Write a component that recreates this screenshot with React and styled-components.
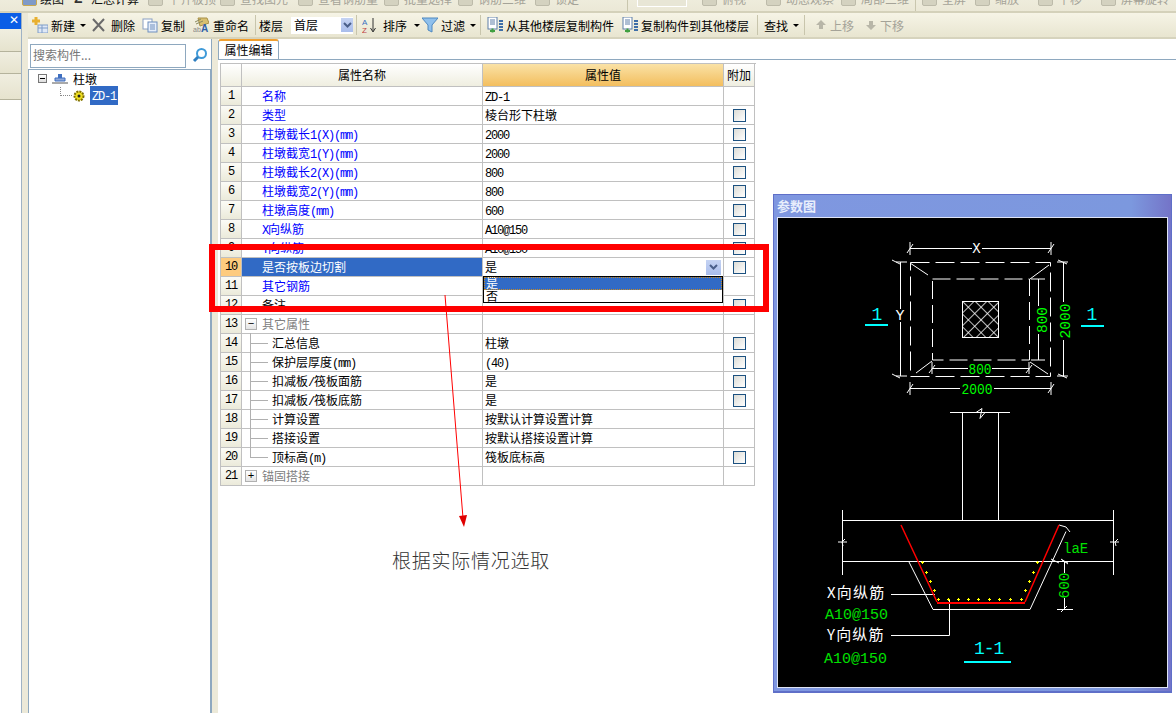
import React from "react";
import styled, { createGlobalStyle } from "styled-components";

const GlobalStyle = createGlobalStyle`
  html, body { margin: 0; padding: 0; background: #fff; }
  body { font: 12px "Noto Sans CJK SC", "Liberation Sans", sans-serif; color: #000; }
`;

const Page = styled.div`
  position: relative;
  width: 1176px;
  height: 713px;
  overflow: hidden;
  display: flex;
  flex-direction: column;
`;

/* top toolbar, cut off by the screenshot */
const TopBar = styled.div`
  flex: 0 0 13px;
  height: 13px;
  overflow: hidden;
  display: flex;
  padding-left: 22px;
  box-sizing: border-box;
  background: linear-gradient(#eeecdc, #ebe8d6);
  border-bottom: 2px solid #d4d1ba;
`;
const TopItem = styled.div`
  flex: 0 0 ${(p) => p.$w}px;
  height: 24px;
  margin-top: -14px;
  display: flex;
  align-items: center;
  gap: ${(p) => p.$gap || 5}px;
  color: ${(p) => (p.$on ? "#111" : "#a5a398")};
  white-space: nowrap;
`;
const TopIcon = styled.i`
  flex: 0 0 15px;
  height: 15px;
  box-sizing: border-box;
  background: ${(p) => (p.$on ? "#7f9ac8" : "#d4d2c0")};
  border: 1px solid ${(p) => (p.$on ? "#c9a850" : "#bdbbaa")};
  border-radius: 2px;
`;
const Sigma = styled.span`
  flex: 0 0 12px;
  font: 700 14px "Liberation Sans", sans-serif;
  color: #333;
`;
const TopSep = styled.div`
  flex: 0 0 ${(p) => p.$w}px;
  box-sizing: border-box;
  border-left: 1px solid #c9c6ae;
`;
const Combo = styled.div`
  flex: 0 0 50px;
  margin-right: 15px;
  height: 7px;
  box-sizing: border-box;
  border: 1px solid #fff;
  border-top: 0;
  background: #e8e6d6;
`;

const Work = styled.div`
  flex: 1;
  min-height: 0;
  display: flex;
`;

/* collapsed nav strip on the far left */
const Strip = styled.div`
  flex: 0 0 21px;
  display: flex;
  flex-direction: column;
  border-right: 1px solid #9fb2c4;
`;
const CloseBar = styled.div`
  height: 16px;
  background: #0a5de6;
  color: #fff;
  font: 12px "Liberation Sans", sans-serif;
  text-align: right;
  padding-right: 2px;
  line-height: 15px;
`;
const StripTab = styled.div`
  height: ${(p) => p.$h}px;
  box-sizing: border-box;
  background: linear-gradient(#f0eee0, #e6e3ce);
  border-bottom: 1px solid #b5b39c;
`;
const StripGap = styled.div`
  flex: 0 0 6px;
  background: #ece9d8;
`;

const Main = styled.div`
  flex: 1;
  min-width: 0;
  display: flex;
  flex-direction: column;
`;

const ToolBar = styled.div`
  flex: 0 0 26px;
  box-sizing: border-box;
  display: flex;
  align-items: center;
  padding-left: 4px;
  background: linear-gradient(#f6f4e6, #e8e5d0);
  border-bottom: 2px solid #d6d3bd;
`;
const Tool = styled.div`
  flex: 0 0 ${(p) => p.$w}px;
  display: flex;
  align-items: center;
  gap: ${(p) => p.$gap || 3}px;
  white-space: nowrap;
  color: ${(p) => (p.$off ? "#a5a398" : "#000")};
`;
const Caret = styled.i`
  width: 0;
  height: 0;
  margin-left: 2px;
  border: 3px solid transparent;
  border-top: 3px solid #000;
  border-bottom: 0;
`;
const Sep = styled.div`
  flex: 0 0 ${(p) => p.$w}px;
  height: 20px;
  box-sizing: border-box;
  border-left: 1px solid #c8c5ac;
`;
const FloorSelect = styled.div`
  flex: 0 0 62px;
  margin-right: 3px;
  height: 17px;
  padding-left: 3px;
  box-sizing: border-box;
  background: #fff;
  display: flex;
  align-items: center;
  justify-content: space-between;
  line-height: 14px;
`;
const ArrowBtn = styled.span`
  width: ${(p) => p.$s || 12}px;
  height: ${(p) => p.$s || 14}px;
  background: linear-gradient(#c5d3f3, #a9bdec);
  display: flex;
  align-items: center;
  justify-content: center;
`;

const Content = styled.div`
  flex: 1;
  min-height: 0;
  display: flex;
`;

const Side = styled.div`
  flex: 0 0 183px;
  display: flex;
  flex-direction: column;
  background: #fff;
`;
const SearchRow = styled.div`
  flex: 0 0 30px;
  padding: 5px 0 0 2px;
  box-sizing: border-box;
  display: flex;
  align-items: flex-start;
  gap: 5px;
`;
const SearchBox = styled.div`
  width: 156px;
  height: 24px;
  box-sizing: border-box;
  border: 1px solid #8ea8bf;
  color: #777;
  line-height: 20px;
  padding-left: 2px;
`;
const TreePane = styled.div`
  flex: 1;
  border: 1px solid #8ea8bf;
  border-width: 1px 1px 0 1px;
  padding: 0 0 0 9px;
`;
const TreeRow = styled.div`
  height: 17px;
  display: flex;
  align-items: center;
  gap: 5px;
  padding-left: ${(p) => p.$indent || 0}px;
`;
const Expander = styled.span`
  width: 9px;
  height: 9px;
  box-sizing: border-box;
  border: 1px solid #777;
  background: linear-gradient(#fff, #ddd);
  display: flex;
  align-items: center;
  justify-content: center;
  &::after { content: ""; width: 5px; height: 1px; background: #000; }
`;
const Picked = styled.span`
  background: #316ac5;
  color: #fff;
  padding: 1px 2px;
  line-height: 15px;
`;
const Dots = styled.span`
  width: 11px;
  height: 8px;
  margin-top: -8px;
  margin-right: -4px;
  border-left: 1px dotted #888;
  border-bottom: 1px dotted #888;
`;

const Splitter = styled.div`
  flex: 0 0 6px;
  background: #ece9d8;
  border-left: 1px solid #8ea8bf;
`;

const EditPane = styled.div`
  flex: 1;
  min-width: 0;
  display: flex;
  flex-direction: column;
`;
const TabRow = styled.div`
  flex: 0 0 20px;
  box-sizing: border-box;
  border-bottom: 1px solid #8ea8bf;
  display: flex;
`;
const Tab = styled.div`
  width: 61px;
  height: 20px;
  box-sizing: border-box;
  background: #fff;
  border: 1px solid #8ea8bf;
  border-top: 2px solid #f0a030;
  border-bottom: 0;
  border-radius: 3px 3px 0 0;
  text-align: center;
  line-height: 17px;
`;
const TableWrap = styled.div`
  padding: 3px 0 0 2px;
`;
const Table = styled.div`
  width: 535px;
  border-top: 1px solid #c0c0c0;
  border-left: 1px solid #c0c0c0;
`;
const Row = styled.div`
  display: grid;
  grid-template-columns: 21px 241px 241px 31px;
  height: ${(p) => p.$h || 19}px;
`;
const Cell = styled.div`
  position: relative;
  box-sizing: border-box;
  border-right: 1px solid #c0c0c0;
  border-bottom: 1px solid #c0c0c0;
  display: flex;
  align-items: center;
  white-space: nowrap;
  line-height: 16px;
`;
const HeadCell = styled(Cell)`
  justify-content: center;
  background: ${(p) =>
    p.$active ? "linear-gradient(#fae2a6, #f3be5e)" : "linear-gradient(#fff, #efeee0)"};
`;
const NumCell = styled(Cell)`
  justify-content: center;
  background: ${(p) =>
    p.$active ? "#fdcb7f" : "linear-gradient(#fbfbf6, #ebeada)"};
`;
const NameCell = styled(Cell)`
  padding-left: ${(p) => (p.$child ? 30 : p.$group ? 3 : 20)}px;
  gap: 5px;
  color: ${(p) =>
    p.$selected ? "#fff" : p.$blue ? "#0000ff" : p.$group ? "#808080" : "#000"};
  background: ${(p) => (p.$selected ? "#316ac5" : "#fff")};
  ${(p) =>
    p.$child &&
    `
    &::before {
      content: "";
      position: absolute;
      left: 9px;
      width: 17px;
      top: 9px;
      height: 1px;
      background: #b0b0b0;
    }
    &::after {
      content: "";
      position: absolute;
      left: 8px;
      width: 1px;
      top: -1px;
      height: ${p.$last ? 11 : 20}px;
      background: #b0b0b0;
    }
  `}
`;
const GroupBox = styled.span`
  width: 12px;
  height: 12px;
  box-sizing: border-box;
  border: 1px solid #b0b0b0;
  background: linear-gradient(#fff, #e4e4e4);
  color: #000;
  display: flex;
  align-items: center;
  justify-content: center;
  font: 11px/10px "Liberation Mono", monospace;
`;
const ValueCell = styled(Cell)`
  padding-left: 2px;
  justify-content: space-between;
  padding-right: 2px;
`;
const AddCell = styled(Cell)`
  justify-content: center;
`;
const Check = styled.span`
  width: 13px;
  height: 13px;
  box-sizing: border-box;
  border: 1px solid #1c5180;
  background: linear-gradient(135deg, #dcdcd6, #fff);
`;
const Latin = styled.span`
  font: 12px "Liberation Mono", monospace;
  letter-spacing: -1.2px;
`;

/* open dropdown list for row 10 */
const DropList = styled.div`
  position: absolute;
  left: 483px;
  top: 276px;
  width: 240px;
  height: 27px;
  box-sizing: border-box;
  border: 1px solid #000;
  background: #fff;
  line-height: 12px;
`;
const DropItem = styled.div`
  height: ${(p) => p.$h}px;
  padding-left: 2px;
  box-sizing: border-box;
  overflow: visible;
  ${(p) =>
    p.$on &&
    `background: #316ac5; color: #fff; outline: 1px dotted #c98a20; outline-offset: -1px;`}
`;

const RedFrame = styled.div`
  position: absolute;
  left: 209px;
  top: 244px;
  width: 560px;
  height: 68px;
  box-sizing: border-box;
  border: 6px solid #ff0000;
`;
const Pointer = styled.svg`
  position: absolute;
  left: 440px;
  top: 290px;
`;
const Note = styled.div`
  position: absolute;
  left: 392px;
  top: 547px;
  font-size: 19px;
  font-weight: 300;
  line-height: 26px;
  color: #333;
  letter-spacing: 0.75px;
`;

/* floating parameter window */
const ParamWindow = styled.div`
  position: absolute;
  left: 773px;
  top: 194px;
  width: 399px;
  height: 499px;
  box-sizing: border-box;
  border: 1px solid #5f6fc8;
  border-width: 1px 1px 2px 1px;
  background: linear-gradient(90deg, #7f97e0, #7c98de 90%, #7474c8);
  padding: 0 3px 3px;
  display: flex;
  flex-direction: column;
`;
const ParamTitle = styled.div`
  flex: 0 0 21px;
  color: #e8eefc;
  font-size: 13px;
  font-weight: 700;
  line-height: 22px;
`;
const ParamCanvas = styled.div`
  flex: 1;
  background: #000;
  border: 1px solid #dfe4f5;
  overflow: hidden;
`;

const mixed = (text) =>
  text.split(/([\x00-\x7f]+)/).map((part, i) =>
    /^[\x00-\x7f]+$/.test(part) ? <Latin key={i}>{part}</Latin> : part
  );

const Svg = ({ w = 16, h = 16, children }) => (
  <svg width={w} height={h} viewBox={`0 0 ${w} ${h}`} style={{ flex: "none" }}>
    {children}
  </svg>
);

const NewIcon = () => (
  <Svg>
    <rect x="6" y="8" width="10" height="8" fill="#dfe8f6" stroke="#7f9dc8" />
    <path d="M6 11h10M10 8v8" stroke="#7f9dc8" />
    <path d="M4 0v8M0 4h8" stroke="#e8b030" strokeWidth="3" />
  </Svg>
);
const DeleteIcon = () => (
  <Svg w={13}>
    <path d="M1 2l11 12M12 2L1 14" stroke="#6a6a6a" strokeWidth="2" />
  </Svg>
);
const CopyIcon = () => (
  <Svg>
    <rect x="1" y="2" width="9" height="10" fill="#fff" stroke="#8aa0c4" />
    <rect x="6" y="5" width="9" height="10" fill="#e6eefa" stroke="#6f8fbe" />
    <path d="M8 8h5M8 10h5M8 12h5" stroke="#6f8fbe" />
  </Svg>
);
const RenameIcon = () => (
  <Svg>
    <path d="M5 1l9 0 2 5-9 3z" fill="#d8c070" stroke="#a89048" />
    <path d="M2 5l6-3M3 7l7-3" stroke="#8a8a60" />
    <text x="0" y="15" fontSize="7" fill="#888" fontFamily="Liberation Sans">ab</text>
    <text x="8" y="15" fontSize="10" fill="#2f5fa8" fontFamily="Liberation Sans" fontWeight="700">A</text>
  </Svg>
);
const SortIcon = () => (
  <Svg>
    <text x="0" y="8" fontSize="8" fill="#3a6fc0" fontFamily="Liberation Sans">A</text>
    <text x="0" y="16" fontSize="8" fill="#c04040" fontFamily="Liberation Sans">Z</text>
    <path d="M11 1v13M8.500 11l2.500 4 2.500-4" stroke="#333" fill="none" />
  </Svg>
);
const FilterIcon = () => (
  <Svg>
    <path d="M0 1h16l-6 7v7l-4-2V8z" fill="#8fc0ec" stroke="#4f88c0" />
  </Svg>
);
const FloorCopyIcon = ({ color }) => (
  <Svg>
    <rect x="1" y="0" width="9" height="12" fill="#fff" stroke="#5f7fa8" />
    <path d="M3 3h5M3 5h5M3 7h5" stroke="#5f7fa8" />
    <path d="M12 4h4M12 7h4M12 10h4M12 13h4" stroke="#3f6fa8" strokeWidth="2" />
    <path d="M3 14h5M5.500 11.500v4" stroke={color} strokeWidth="2" />
  </Svg>
);
const UpIcon = () => (
  <Svg w={12}>
    <path d="M6 3l5 5H8v4H4V8H1z" fill="#b8b6a8" />
  </Svg>
);
const DownIcon = () => (
  <Svg w={12}>
    <path d="M6 13l5-5H8V4H4v4H1z" fill="#b8b6a8" />
  </Svg>
);
const Chevron = () => (
  <svg width="9" height="7" viewBox="0 0 9 7">
    <path d="M1 1l3.500 3.500L8 1" stroke="#4a5f8a" strokeWidth="2" fill="none" />
  </svg>
);
const SearchIcon = () => (
  <svg width="16" height="16" viewBox="0 0 16 16" style={{ marginTop: 3, marginLeft: 1 }}>
    <circle cx="9.500" cy="6.500" r="4.500" fill="#fff" stroke="#3f9ad8" strokeWidth="2" />
    <path d="M6 10l-4 4" stroke="#2f7fc0" strokeWidth="3" />
  </svg>
);
const PierIcon = () => (
  <Svg w={16} h={11}>
    <path d="M6 1h4v4H6z" fill="#3f6fc0" />
    <path d="M3 5h10v3H3z" fill="#8fa8d8" stroke="#3f6fc0" />
    <path d="M0 10h16" stroke="#555" />
  </Svg>
);
const GearIcon = () => (
  <Svg w={12} h={12}>
    <circle cx="6" cy="6" r="4.500" fill="#f0e020" stroke="#807000" strokeDasharray="2 1" strokeWidth="2" />
    <circle cx="6" cy="6" r="1.500" fill="#222" />
  </Svg>
);

const topItems = [
  { w: 52, t: "绘图", on: true, gap: 3 },
  { w: 74, t: "汇总计算", on: true, sigma: true },
  { w: 72, t: "平齐板顶" },
  { w: 78, t: "查找图元" },
  { w: 86, t: "查看钢筋量" },
  { w: 74, t: "批量选择" },
  { w: 77, t: "钢筋三维" },
  { w: 92, t: "锁定" },
];
const topItems2 = [
  { w: 64, t: "俯视" },
  { w: 75, t: "动态观察" },
  { w: 74, t: "局部三维" },
];
const topItems3 = [
  { w: 53, t: "全屏" },
  { w: 63, t: "缩放" },
  { w: 63, t: "平移" },
  { w: 75, t: "屏幕旋转" },
];

const rows = [
  { n: 1, name: "名称", value: "ZD-1", blue: true },
  { n: 2, name: "类型", value: "棱台形下柱墩", blue: true, check: true },
  { n: 3, name: "柱墩截长1(X)(mm)", value: "2000", blue: true, check: true },
  { n: 4, name: "柱墩截宽1(Y)(mm)", value: "2000", blue: true, check: true },
  { n: 5, name: "柱墩截长2(X)(mm)", value: "800", blue: true, check: true },
  { n: 6, name: "柱墩截宽2(Y)(mm)", value: "800", blue: true, check: true },
  { n: 7, name: "柱墩高度(mm)", value: "600", blue: true, check: true },
  { n: 8, name: "X向纵筋", value: "A10@150", blue: true, check: true },
  { n: 9, name: "Y向纵筋", value: "A10@150", blue: true, check: true },
  { n: 10, name: "是否按板边切割", value: "是", selected: true, check: true },
  { n: 11, name: "其它钢筋", value: "", blue: true },
  { n: 12, name: "备注", value: "", check: true },
  { n: 13, name: "其它属性", value: "", group: "−" },
  { n: 14, name: "汇总信息", value: "柱墩", child: true, check: true },
  { n: 15, name: "保护层厚度(mm)", value: "(40)", child: true, check: true },
  { n: 16, name: "扣减板/筏板面筋", value: "是", child: true, check: true },
  { n: 17, name: "扣减板/筏板底筋", value: "是", child: true, check: true },
  { n: 18, name: "计算设置", value: "按默认计算设置计算", child: true },
  { n: 19, name: "搭接设置", value: "按默认搭接设置计算", child: true },
  { n: 20, name: "顶标高(m)", value: "筏板底标高", child: true, last: true, check: true },
  { n: 21, name: "锚固搭接", value: "", group: "+" },
];

const W = { stroke: "#fff", fill: "none" };
const mono = "Liberation Mono, monospace";
const cjk = "Noto Sans CJK SC, sans-serif";

const sideDots = [[921, 561], [925, 571], [929, 580], [933, 589], [1036, 561], [1032, 571], [1028, 580], [1024, 589]];
const bottomDots = [937, 947, 957, 967, 977, 988, 998, 1009, 1020].map((x) => [x, 598]);

const Drawing = () => (
  <svg width="390" height="472" viewBox="777 217 390 472" style={{ display: "block" }}>
    <defs>
      <pattern id="hatch" width="9" height="9" patternUnits="userSpaceOnUse" patternTransform="rotate(45)">
        <path d="M0 0h9M0 0v9" stroke="#fff" strokeWidth="1.500" />
      </pattern>
    </defs>

    {/* plan view */}
    <g {...W}>
      <path d="M909 247.500h62M981 247.500h69M909 241v13M1050 241v13M906 252l6-9M1047 252l6-9" />
      <path d="M899.500 261v47M899.500 321v54M895 261h11M895 375h11M891 259l8 4M891 373l8 4" />
      <path d="M1062.500 261v40M1062.500 339v36M1056 261h11M1056 375h11M1057 259l9 4M1057 373l9 4" />
      <path d="M1037.500 278v27M1037.500 333v26M1030 278h14M1030 359h14" />
      <path d="M931 367.500h36M991 367.500h37M931 361v12M1028 361v12M928 372l6-8M1025 372l6-8" />
      <path d="M909 387.500h50M993 387.500h57M909 381v13M1050 381v13M906 392l6-9M1047 392l6-9" />
      <rect x="909.500" y="261.500" width="140" height="114" strokeDasharray="19 6" />
      <rect x="931.500" y="278" width="97" height="81" strokeDasharray="18 6" />
      <path d="M909 262l18 12M1048 264l-19 14M931 360l-16 12M1029 361l18 12" />
      <rect x="961.500" y="300.500" width="36" height="36" fill="url(#hatch)" />
    </g>
    <g fontFamily={mono} textAnchor="middle">
      <text x="975.500" y="252" fontSize="14" fill="#fff">X</text>
      <text x="899" y="319" fontSize="15" fill="#fff">Y</text>
      <text x="979" y="373" fontSize="15" fill="#00ff00" textLength="23" lengthAdjust="spacingAndGlyphs">800</text>
      <text x="976" y="393" fontSize="15" fill="#00ff00" textLength="31" lengthAdjust="spacingAndGlyphs">2000</text>
      <text transform="translate(1046 319) rotate(-90)" fontSize="15" fill="#00ff00" textLength="26" lengthAdjust="spacingAndGlyphs">800</text>
      <text transform="translate(1069 320) rotate(-90)" fontSize="15" fill="#00ff00" textLength="35" lengthAdjust="spacingAndGlyphs">2000</text>
      <text x="876" y="319" fontSize="18" fill="#00ffff">1</text>
      <text x="1091" y="319" fontSize="18" fill="#00ffff">1</text>
    </g>
    <path d="M864 324h23M1080 325h23" stroke="#00ffff" strokeWidth="2" />

    {/* section view */}
    <g {...W}>
      <path d="M949 411.500h60M961.500 411.500v108M997.500 411.500v108" />
      <path d="M975 411.500l6-4-2 10 5-6" />
      <path d="M841 519.500h272M841 560.500h272M841.500 509v65M1112.500 509v65" />
      <path d="M837 541h9M841 541l3-3M841 541l1 4M1109 541h9M1114 541l3-3M1114 541l1 4" />
      <path d="M908 561l24 47.500h97l36-78" />
      <path d="M1058 524l7 2 4 5M1061 559l6 3M1050 558l8 4" />
      <path d="M890 593.500h44M890 634.500h58.500v-36" />
      <path d="M1063.500 560v12M1063.500 597v11M1056 608.500h16M1060 611l6-6M1060 558l7 5" />
    </g>
    <path d="M900 524l36 77M1058 524l-34 77" stroke="#ff0000" strokeWidth="1.500" fill="none" />
    <path d="M936 602h88" stroke="#ff0000" strokeWidth="2" fill="none" />
    <g stroke="#ffff00">
      {[...bottomDots, ...sideDots].map(([x, y]) => (
        <path key={`${x}-${y}`} d={`M${x - 1} ${y + 0.5}h3M${x + 0.5} ${y - 1}v3`} />
      ))}
    </g>
    <g fontFamily={mono}>
      <text x="826" y="597" fontSize="15" fill="#fff" fontFamily={cjk} letterSpacing="1.2">X向纵筋</text>
      <text x="826" y="639" fontSize="15" fill="#fff" fontFamily={cjk} letterSpacing="1.2">Y向纵筋</text>
      <text x="824" y="618" fontSize="15" fill="#00e000">A10@150</text>
      <text x="823" y="662" fontSize="15" fill="#00e000">A10@150</text>
      <text x="1062" y="552" fontSize="14" fill="#00e000">laE</text>
      <text x="973" y="653" fontSize="18" fill="#00ffff" letterSpacing="-1">1-1</text>
      <text transform="translate(1068 584.500) rotate(-90)" textAnchor="middle" fontSize="15" fill="#00e000" textLength="26" lengthAdjust="spacingAndGlyphs">600</text>
    </g>
    <path d="M963 661h47" stroke="#00ffff" strokeWidth="2" />
  </svg>
);

export default function App() {
  return (
    <Page>
      <GlobalStyle />
      <TopBar>
        {topItems.map((it) => (
          <TopItem key={it.t} $w={it.w} $on={it.on} $gap={it.gap}>
            {it.sigma ? <Sigma>Σ</Sigma> : <TopIcon $on={it.on} />}
            {it.t}
          </TopItem>
        ))}
        <TopSep $w={10} />
        <Combo />
        {topItems2.map((it) => (
          <TopItem key={it.t} $w={it.w}>
            <TopIcon />
            {it.t}
          </TopItem>
        ))}
        <TopSep $w={7} />
        {topItems3.map((it) => (
          <TopItem key={it.t} $w={it.w}>
            <TopIcon />
            {it.t}
          </TopItem>
        ))}
      </TopBar>

      <Work>
        <Strip>
          <CloseBar>✕</CloseBar>
          <StripTab $h={23} />
          <StripTab $h={22} />
          <StripTab $h={26} />
        </Strip>
        <StripGap />
        <Main>
          <ToolBar>
            <Tool $w={60}><NewIcon />新建<Caret /></Tool>
            <Tool $w={50} $gap={6}><DeleteIcon />删除</Tool>
            <Tool $w={51}><CopyIcon />复制</Tool>
            <Tool $w={62} $gap={4}><RenameIcon />重命名</Tool>
            <Sep $w={4} />
            <Tool $w={32}>楼层</Tool>
            <FloorSelect>首层<ArrowBtn><Chevron /></ArrowBtn></FloorSelect>
            <Sep $w={6} />
            <Tool $w={60} $gap={5}><SortIcon />排序<Caret /></Tool>
            <Tool $w={58}><FilterIcon />过滤<Caret /></Tool>
            <Sep $w={7} />
            <Tool $w={135}><FloorCopyIcon color="#40a040" />从其他楼层复制构件</Tool>
            <Tool $w={135}><FloorCopyIcon color="#40a040" />复制构件到其他楼层</Tool>
            <Sep $w={7} />
            <Tool $w={40}>查找<Caret /></Tool>
            <Sep $w={11} />
            <Tool $w={50} $off><UpIcon />上移</Tool>
            <Tool $w={50} $off><DownIcon />下移</Tool>
          </ToolBar>

          <Content>
            <Side>
              <SearchRow>
                <SearchBox>搜索构件...</SearchBox>
                <SearchIcon />
              </SearchRow>
              <TreePane>
                <TreeRow>
                  <Expander />
                  <PierIcon />
                  柱墩
                </TreeRow>
                <TreeRow $indent={22}>
                  <Dots />
                  <GearIcon />
                  <Picked><Latin>ZD-1</Latin></Picked>
                </TreeRow>
              </TreePane>
            </Side>
            <Splitter />
            <EditPane>
              <TabRow>
                <Tab>属性编辑</Tab>
              </TabRow>
              <TableWrap>
                <Table>
                  <Row $h={23}>
                    <HeadCell />
                    <HeadCell>属性名称</HeadCell>
                    <HeadCell $active>属性值</HeadCell>
                    <HeadCell>附加</HeadCell>
                  </Row>
                  {rows.map((r) => (
                    <Row key={r.n}>
                      <NumCell $active={r.selected}><Latin>{r.n}</Latin></NumCell>
                      <NameCell
                        $blue={r.blue}
                        $selected={r.selected}
                        $group={!!r.group}
                        $child={r.child}
                        $last={r.last}
                      >
                        {r.group && <GroupBox>{r.group}</GroupBox>}
                        <span>{mixed(r.name)}</span>
                      </NameCell>
                      <ValueCell>
                        <span>{mixed(r.value)}</span>
                        {r.selected && <ArrowBtn $s={15}><Chevron /></ArrowBtn>}
                      </ValueCell>
                      <AddCell>{r.check && <Check />}</AddCell>
                    </Row>
                  ))}
                </Table>
              </TableWrap>
            </EditPane>
          </Content>
        </Main>
      </Work>

      <DropList>
        <DropItem $h={13} $on>是</DropItem>
        <DropItem $h={12}>否</DropItem>
      </DropList>
      <RedFrame />
      <Pointer width="30" height="240" viewBox="0 0 30 240">
        <path d="M5 5L23 228" stroke="#ff0000" fill="none" />
        <path d="M19 226l8-1-3 12z" fill="#e00000" />
      </Pointer>
      <Note>根据实际情况选取</Note>

      <ParamWindow>
        <ParamTitle>参数图</ParamTitle>
        <ParamCanvas>
          <Drawing />
        </ParamCanvas>
      </ParamWindow>
    </Page>
  );
}
